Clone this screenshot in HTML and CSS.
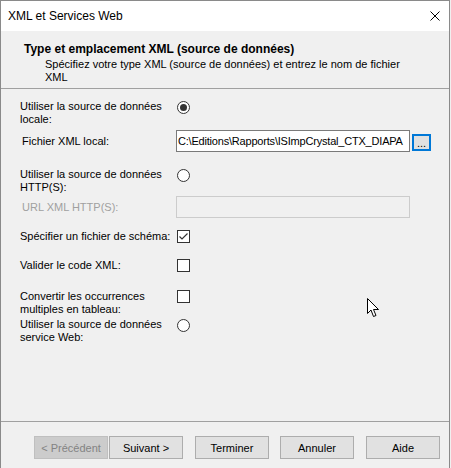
FILE: index.html
```html
<html>
<head>
  <meta charset="utf-8">
  <title>XML et Services Web</title>
  <link rel="stylesheet" href="styles.css">
</head>
<body>
  <div class="window">
    <div class="titlebar">
      <span class="title">XML et Services Web</span>
      <svg class="close" width="10" height="10" viewBox="0 0 10 10">
        <path d="M0.5 0.5 L9.5 9.5 M9.5 0.5 L0.5 9.5" stroke="#000" stroke-width="1" fill="none"/>
      </svg>
    </div>

    <div class="header">
      <div class="header-title">Type et emplacement XML (source de données)</div>
      <div class="header-sub">Spécifiez votre type XML (source de données) et entrez le nom de fichier<br>XML</div>
    </div>

    <div class="content">
      <div class="row row-local">
        <div class="label">Utiliser la source de données<br>locale:</div>
        <span class="radio checked"></span>
      </div>
      <div class="row row-file">
        <div class="label sub">Fichier XML local:</div>
        <div class="textbox">C:\Editions\Rapports\ISImpCrystal_CTX_DIAPA</div>
        <button class="browse">...</button>
      </div>
      <div class="row row-http">
        <div class="label">Utiliser la source de données<br>HTTP(S):</div>
        <span class="radio"></span>
      </div>
      <div class="row row-url">
        <div class="label sub disabled">URL XML HTTP(S):</div>
        <div class="textbox off"></div>
      </div>
      <div class="row row-schema">
        <div class="label">Spécifier un fichier de schéma:</div>
        <span class="check checked">
          <svg width="11" height="11" viewBox="0 0 11 11">
            <path d="M1.5 5.5 L4 8 L9.5 2.5" stroke="#333" stroke-width="1.2" fill="none"/>
          </svg>
        </span>
      </div>
      <div class="row row-valid">
        <div class="label">Valider le code XML:</div>
        <span class="check"></span>
      </div>
      <div class="row row-conv">
        <div class="label">Convertir les occurrences<br>multiples en tableau:</div>
        <span class="check"></span>
      </div>
      <div class="row row-web">
        <div class="label">Utiliser la source de données<br>service Web:</div>
        <span class="radio"></span>
      </div>

      <!-- mouse pointer from the screenshot -->
      <svg class="cursor" width="13" height="20" viewBox="0 0 13 20">
        <path d="M0.5 0.5 L0.5 15.5 L4 12 L6.5 18.5 L9 17.5 L6.5 11.5 L11.5 11.5 Z" fill="#fff" stroke="#000" stroke-width="1"/>
      </svg>
    </div>

    <div class="footer">
      <button class="btn prev" disabled>&lt; Précédent</button>
      <button class="btn next">Suivant &gt;</button>
      <button class="btn finish">Terminer</button>
      <button class="btn cancel">Annuler</button>
      <button class="btn">Aide</button>
    </div>
  </div>
</body>
</html>
```

FILE: styles.css
```css
body {
  margin: 0;
  background: #f0f0f0;
  font-family: "Liberation Sans", Arial, sans-serif;
  font-size: 11px;
  color: #000;
}

.window {
  width: 448px;
  height: 467px;
  border: 1px solid #8a8a8a;
  border-bottom: none;
  background: #f0f0f0;
  display: flex;
  flex-direction: column;
}

.titlebar {
  height: 30px;
  flex: none;
  background: #fff;
  display: flex;
  align-items: center;
  padding: 0 9px 0 7px;
}

.title {
  flex: 1;
  font-size: 12px;
  padding-bottom: 1px;
}

.close {
  display: block;
}

.header {
  height: 58px;
  flex: none;
  border-bottom: 1px solid #a0a0a0;
  padding: 11px 0 0 23px;
  box-sizing: border-box;
}

.header-title {
  font-weight: bold;
  font-size: 12px;
  line-height: 14px;
}

.header-sub {
  padding-left: 21px;
  padding-top: 2px;
  line-height: 13px;
}

.content {
  flex: 1;
  position: relative;
  padding: 11px 0 0 19px;
}

.row {
  display: flex;
  align-items: center;
  line-height: 13px;
}

.label {
  width: 157px;
  flex: none;
}

.label.sub {
  padding-left: 2px;
  width: 155px;
}

.label.disabled {
  color: #a0a0a0;
}

.row-local,
.row-http,
.row-conv,
.row-web {
  align-items: flex-start;
}

.row-file { margin-top: 4px; }
.row-http { margin-top: 16px; }
.row-url { margin-top: 2px; }
.row-schema { margin-top: 12px; }
.row-valid { margin-top: 16px; }
.row-conv { margin-top: 18px; }
.row-web { margin-top: 2px; }

.radio {
  width: 11px;
  height: 11px;
  border: 1px solid #333;
  border-radius: 50%;
  background: #fff;
  position: relative;
  margin-top: 1px;
}

.radio.checked::after {
  content: "";
  position: absolute;
  left: 2px;
  top: 2px;
  width: 7px;
  height: 7px;
  border-radius: 50%;
  background: #333;
}

.check {
  width: 11px;
  height: 11px;
  border: 1px solid #333;
  background: #fff;
}

.check svg {
  display: block;
}

.textbox {
  width: 231px;
  height: 20px;
  margin-left: -1px;
  border: 1px solid #7a7a7a;
  background: #fff;
  line-height: 20px;
  padding-left: 1px;
  font-size: 11px;
  letter-spacing: -0.2px;
  overflow: hidden;
  white-space: nowrap;
}

.textbox.off {
  border-color: #cccccc;
  background: #f0f0f0;
}

.browse {
  width: 19px;
  height: 17px;
  margin-left: 2px;
  margin-top: 3px;
  padding: 0;
  border: 2px solid #0078d7;
  background: #e1e1e1;
  font-family: "Liberation Sans", Arial, sans-serif;
  font-size: 11px;
  line-height: 10px;
}

.cursor {
  position: absolute;
  left: 366px;
  top: 209px;
}

.footer {
  height: 47px;
  flex: none;
  box-sizing: border-box;
  border-top: 1px solid #a0a0a0;
  display: flex;
  align-items: flex-start;
  padding: 14px 0 0 33px;
}

.btn {
  width: 74px;
  height: 23px;
  padding: 0;
  border: 1px solid #adadad;
  background: #e1e1e1;
  font-family: "Liberation Sans", Arial, sans-serif;
  font-size: 11px;
  color: #000;
}

.btn[disabled] {
  background: #cccccc;
  border-color: #bfbfbf;
  color: #838383;
}

.btn.prev { margin-right: 1px; }
.btn.next { margin-right: 12px; }
.btn.finish { margin-right: 11px; }
.btn.cancel { margin-right: 12px; }
```
